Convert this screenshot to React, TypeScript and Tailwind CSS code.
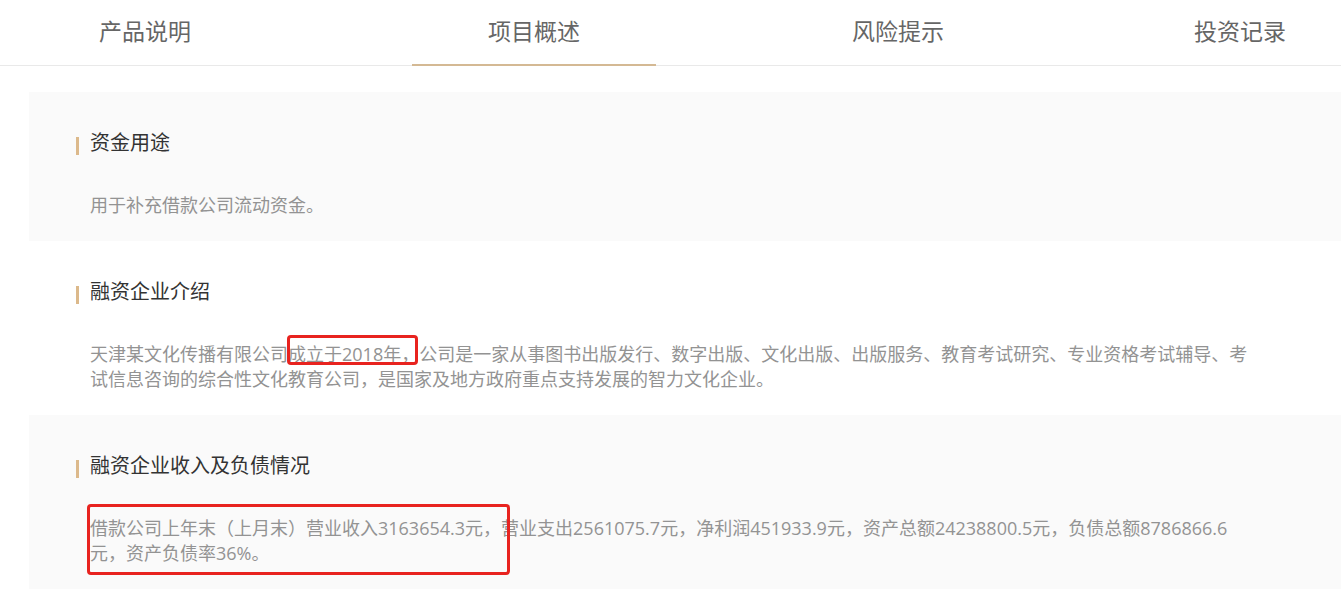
import React from 'react';

const tabs = [
  { label: '产品说明', cls: 'w-[290px]' },
  { label: '项目概述', cls: 'ml-[122px] w-[244px]', active: true },
  { label: '风险提示', cls: 'ml-[120px] w-[244px]' },
  { label: '投资记录', cls: 'ml-[120px] w-[200px]' },
];

function Heading({ children }: { children: React.ReactNode }) {
  return (
    <div className="flex items-end h-[28px] pl-[47px]">
      <span className="w-[3px] h-[18px] mb-[1px] bg-[#dcb98b]" />
      <h3 className="ml-[11px] text-[20px] leading-[28px] text-[#333333]">{children}</h3>
    </div>
  );
}

function Section({
  title,
  gray,
  textWidth,
  children,
}: {
  title: string;
  gray?: boolean;
  textWidth: string;
  children: React.ReactNode;
}) {
  return (
    <section className={`pt-[36px] pb-[23px] ${gray ? 'bg-[#fafafa]' : 'bg-white'}`}>
      <Heading>{title}</Heading>
      <div className="mt-[37px] pl-[61px]">
        <div
          className={`relative ${textWidth} text-[18px] leading-[25px] text-[#939393]`}
          style={{ fontFamily: '"Open Sans", "Noto Sans CJK SC", sans-serif' }}
        >
          {children}
        </div>
      </div>
    </section>
  );
}

export default function App() {
  return (
    <div
      className="w-[1341px] h-[598px] overflow-hidden bg-white"
      style={{ fontFamily: '"Noto Sans CJK SC", "Noto Sans", sans-serif' }}
    >
      <div className="flex h-[66px] border-b border-[#e9e9e9]">
        {tabs.map((t) => (
          <div
            key={t.label}
            className={`${t.cls} flex items-center justify-center pb-[4px] text-[23px] text-[#666666] ${
              t.active ? 'border-b-2 border-[#d4b994] -mb-px' : ''
            }`}
          >
            {t.label}
          </div>
        ))}
      </div>

      <div className="mt-[26px] ml-[29px]">
        <Section title="资金用途" gray textWidth="max-w-[1170px]">
          <p>用于补充借款公司流动资金。</p>
        </Section>

        <Section title="融资企业介绍" textWidth="max-w-[1170px]">
          <p>
            天津某文化传播有限公司
            <span className="relative">
              成立于2018年，
              <span className="absolute left-[-1px] right-[1px] top-[-7px] bottom-[1px] border-[3px] border-[#e8231f] rounded-[4px]" />
            </span>
            公司是一家从事图书出版发行、数字出版、文化出版、出版服务、教育考试研究、专业资格考试辅导、考试信息咨询的综合性文化教育公司，是国家及地方政府重点支持发展的智力文化企业。
          </p>
        </Section>

        <Section title="融资企业收入及负债情况" gray textWidth="max-w-[1150px]">
          <p>
            借款公司上年末（上月末）营业收入3163654.3元，营业支出2561075.7元，净利润451933.9元，资产总额24238800.5元，负债总额8786866.6元，资产负债率36%。
          </p>
          <span className="absolute left-[-3px] top-[-12px] w-[423px] h-[71px] border-[3px] border-[#e8231f] rounded-[4px]" />
        </Section>
      </div>
    </div>
  );
}
